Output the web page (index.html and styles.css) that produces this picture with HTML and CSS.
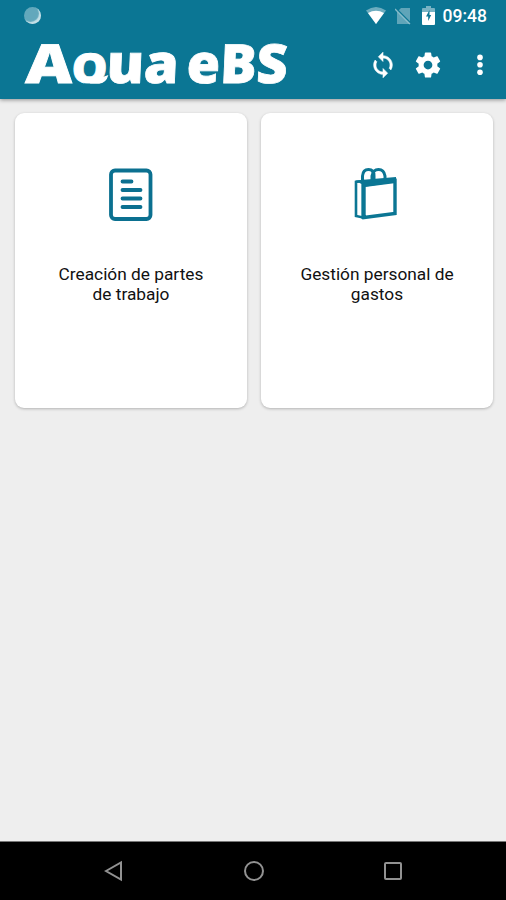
FILE: index.html
```
<!DOCTYPE html>
<html lang="es">
<head>
    <meta charset="UTF-8">
    <meta name="viewport" content="width=device-width, initial-scale=1.0">
    <title>Aqua eBS</title>
    <link rel="stylesheet" href="styles.css">
</head>
<body>
    <header class="header">
        <div class="status-bar">
            <span class="status-dot"></span>
            <div class="status-icons">
                <svg class="wifi" width="20" height="17" viewBox="0 0 20 17">
                    <path d="M0 3.5Q10-3.5 20 3.5L10 17Z" fill="#fff" opacity=".4"/>
                    <path d="M2 6Q10 1.5 18 6L10 17Z" fill="#fff"/>
                </svg>
                <svg class="no-sim" width="17" height="18" viewBox="0 0 17 18">
                    <path d="M6 1H15V17H2V5Z" fill="#fff" opacity=".35"/>
                    <path d="M0 1L16 17" stroke="#0b7694" stroke-width="2.4"/>
                    <path d="M0 2L15 17" stroke="#fff" stroke-width="1.3" opacity=".5"/>
                </svg>
                <svg class="battery" width="13" height="19" viewBox="0 0 13 19">
                    <path d="M4 0H9V2H12Q13 2 13 3V7H0V3Q0 2 1 2H4Z" fill="#fff" opacity=".45"/>
                    <path d="M0 6H13V18Q13 19 12 19H1Q0 19 0 18Z" fill="#fff"/>
                    <path d="M7.5 4L4 10.5H6.2V15L9.2 9H7.5Z" fill="#0b7694"/>
                </svg>
                <span class="clock">09:48</span>
            </div>
        </div>
        <div class="toolbar">
            <svg class="logo" width="270" height="61" viewBox="0 0 270 61">
                <g transform="translate(2 0) skewX(-2.5)">
                    <text y="45"><tspan x="1" textLength="47" lengthAdjust="spacingAndGlyphs">A</tspan><tspan class="small-q" x="47" textLength="36" lengthAdjust="spacingAndGlyphs">Q</tspan><tspan x="82" textLength="72" lengthAdjust="spacingAndGlyphs">ua</tspan><tspan x="162" textLength="101" lengthAdjust="spacingAndGlyphs">eBS</tspan></text>
                    <!-- short tail of the q, sitting on the baseline -->
                    <rect x="60" y="45.5" width="26" height="9" fill="#0b7694"/>
                    <path d="M69 38Q75 41 84 37Q82 45.500 75 45.500H66Z" fill="#fff"/>
                </g>
            </svg>
            <div class="actions">
                <svg class="sync" width="28" height="28" viewBox="0 0 24 24" fill="#fff" stroke="#fff" stroke-width=".5">
                    <path d="M12 4V1L8 5l4 4V6c3.31 0 6 2.69 6 6 0 1.01-.25 1.97-.7 2.8l1.46 1.46C19.54 15.03 20 13.57 20 12c0-4.42-3.58-8-8-8zm0 14c-3.31 0-6-2.69-6-6 0-1.01.25-1.97.7-2.8L5.24 7.74C4.46 8.97 4 10.43 4 12c0 4.42 3.58 8 8 8v3l4-4-4-4v3z"/>
                </svg>
                <svg class="gear" width="30" height="30" viewBox="0 0 24 24" fill="#fff">
                    <path d="M19.43 12.98c.04-.32.07-.64.07-.98s-.03-.66-.07-.98l2.11-1.65c.19-.15.24-.42.12-.64l-2-3.46c-.12-.22-.39-.3-.61-.22l-2.49 1c-.52-.4-1.08-.73-1.69-.98l-.38-2.65C14.46 2.18 14.25 2 14 2h-4c-.25 0-.46.18-.49.42l-.38 2.65c-.61.25-1.17.59-1.69.98l-2.49-1c-.23-.09-.49 0-.61.22l-2 3.46c-.13.22-.07.49.12.64l2.11 1.65c-.04.32-.07.65-.07.98s.03.66.07.98l-2.11 1.65c-.19.15-.24.42-.12.64l2 3.46c.12.22.39.3.61.22l2.49-1c.52.4 1.08.73 1.69.98l.38 2.65c.03.24.24.42.49.42h4c.25 0 .46-.18.49-.42l.38-2.65c.61-.25 1.17-.59 1.69-.98l2.49 1c.23.09.49 0 .61-.22l2-3.46c.12-.22.07-.49-.12-.64l-2.11-1.65zM12 15.5c-1.93 0-3.5-1.57-3.5-3.5s1.57-3.5 3.5-3.5 3.5 1.57 3.5 3.5-1.57 3.5-3.5 3.5z"/>
                </svg>
                <svg class="more" width="8" height="22" viewBox="0 0 8 22" fill="#fff">
                    <circle cx="4" cy="3.4" r="2.8"/>
                    <circle cx="4" cy="10.8" r="2.8"/>
                    <circle cx="4" cy="18.2" r="2.8"/>
                </svg>
            </div>
        </div>
    </header>

    <main class="cards">
        <div class="card">
            <svg class="card-icon" width="48" height="56" viewBox="0 0 48 56" fill="none" stroke="#0b7090">
                <rect x="4" y="5.5" width="39.5" height="48.5" rx="4" stroke-width="3.8"/>
                <path d="M15.5 16.5H24.5M15.5 25H33.5M15.5 33.5H33.5M15.5 42H33.5" stroke-width="3.8" stroke-linecap="round"/>
            </svg>
            <p class="card-title">Creación de partes<br>de trabajo</p>
        </div>
        <div class="card">
            <svg class="card-icon bag" width="48" height="56" viewBox="0 0 48 56" fill="none" stroke="#0b7694">
                <path d="M10.5 17V11Q11 4.5 16.5 4.5T22 11V16" stroke-width="3"/>
                <path d="M20 16V11Q21 4.5 26.5 4.5T33 11V14" stroke-width="3"/>
                <path d="M4 17L11 16V52.500L4 51Z" stroke-width="2.6"/>
                <path d="M3 15.5L44 12V18L13 22V54H9.500V19Z" fill="#0b7694" stroke="none"/>
                <path d="M12 20L43 15.5V48.5L12 52.500Z" stroke-width="3.4"/>
            </svg>
            <p class="card-title">Gestión personal de<br>gastos</p>
        </div>
    </main>

    <nav class="nav-bar">
        <svg width="20" height="22" viewBox="0 0 20 22">
            <path d="M2 11L17 2.5V19.5Z"/>
        </svg>
        <svg width="22" height="22" viewBox="0 0 22 22">
            <circle cx="11" cy="11" r="9"/>
        </svg>
        <svg width="20" height="22" viewBox="0 0 20 22">
            <rect x="2" y="3" width="16" height="16" rx="1"/>
        </svg>
    </nav>
</body>
</html>
```
FILE: styles.css
```
body {
    margin: 0;
    height: 900px;
    display: flex;
    flex-direction: column;
    background-color: #eeeeee;
    color: #111111;
    font-family: Roboto, 'Liberation Sans', sans-serif;
    overflow: hidden;
}

svg {
    display: block;
    flex: none;
}

.header {
    height: 99px;
    background-color: #0b7694;
    box-shadow: 0 1px 4px rgba(0, 0, 0, 0.4);
}

.status-bar {
    height: 33px;
    display: flex;
    justify-content: space-between;
    padding: 0 19px 0 24px;
    box-sizing: border-box;
}

.status-dot {
    width: 17px;
    height: 17px;
    margin-top: 7px;
    border-radius: 50%;
    background-color: #62a8bc;
    box-shadow: inset -2px -2px 1px #c4e0e7;
}

.status-icons {
    display: flex;
    align-items: flex-start;
    padding-top: 6px;
}

.wifi {
    margin: 1px 9px 0 0;
}

.no-sim {
    margin: 1px 10px 0 0;
}

.battery {
    margin-right: 8px;
}

.clock {
    color: #ffffff;
    font-size: 17.5px;
    font-weight: 500;
    line-height: 21px;
}

.toolbar {
    height: 66px;
    display: flex;
    justify-content: space-between;
    padding: 5px 22px 0 24px;
    box-sizing: border-box;
}

.logo {
    overflow: visible;
}

.logo text {
    fill: #ffffff;
    stroke: #ffffff;
    stroke-width: 0.8px;
    font-family: 'Open Sans', sans-serif;
    font-size: 54px;
    font-weight: 800;
}

.logo .small-q {
    font-size: 41px;
}

.actions {
    display: flex;
    align-items: center;
    height: 53px;
}

.gear {
    margin-left: 16px;
}

.more {
    margin-left: 33px;
}

.cards {
    flex: 1;
    display: grid;
    grid-template-columns: 1fr 1fr;
    gap: 14px;
    align-items: start;
    padding: 14px 13px 0 15px;
}

.card {
    height: 295px;
    display: flex;
    flex-direction: column;
    align-items: center;
    box-sizing: border-box;
    padding-top: 52px;
    border-radius: 9px;
    background-color: #ffffff;
    box-shadow: 0 1px 3px rgba(0, 0, 0, 0.25);
}

.bag {
    margin-right: 3px;
}

.card-title {
    margin: 43px 0 0;
    font-size: 17.3px;
    line-height: 20px;
    text-align: center;
    white-space: nowrap;
}

.nav-bar {
    height: 59px;
    display: flex;
    align-items: center;
    justify-content: space-between;
    box-sizing: border-box;
    padding: 0 103px 0 104px;
    background-color: #000000;
    border-top: 1px solid #777777;
}

.nav-bar svg {
    fill: none;
    stroke: #929292;
    stroke-width: 2;
}
```
